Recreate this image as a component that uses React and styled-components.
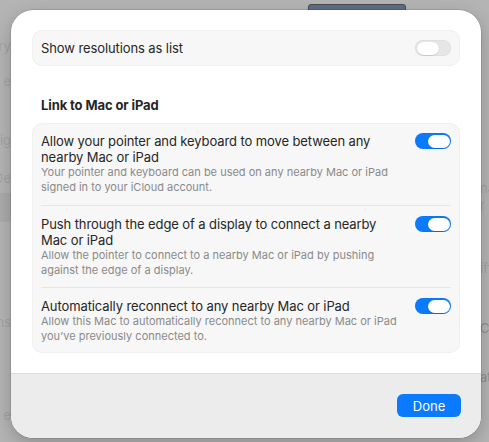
import React from 'react';
import styled, { createGlobalStyle } from 'styled-components';

const GlobalStyle = createGlobalStyle`
  html, body {
    margin: 0;
    padding: 0;
    background: #b4b4b4;
  }
  body {
    font-family: Inter, "Liberation Sans", sans-serif;
    -webkit-font-smoothing: antialiased;
  }
`;

const Screen = styled.div`
  position: relative;
  width: 489px;
  height: 442px;
  overflow: hidden;
  background: #b4b4b4;
`;

// the window behind the sheet, mostly hidden
const Backdrop = styled.div`
  display: flex;
  justify-content: space-between;
  height: 100%;
`;

const Strip = styled.div`
  width: ${({ $w }) => $w}px;
  overflow: hidden;
  display: flex;
  flex-direction: column;
`;

const Frag = styled.div`
  height: ${({ $h }) => $h}px;
  width: 100%;
  flex-shrink: 0;
  display: flex;
  align-items: center;
  justify-content: ${({ $side }) => ($side === 'left' ? 'flex-end' : 'flex-start')};
  font-size: 13px;
  color: ${({ $dark }) => ($dark ? '#8e8e8e' : '#a2a2a2')};
  background: ${({ $band }) => ($band ? '#ababab' : 'transparent')};
  white-space: nowrap;
  filter: blur(0.4px);
`;

const TopButton = styled.div`
  position: absolute;
  left: 308px;
  top: 4px;
  width: 98px;
  height: 12px;
  border-radius: 3px;
  background: #5a6f8a;
  border: 1px solid #4a4a4a;
  box-sizing: border-box;
`;

const Sheet = styled.div`
  position: absolute;
  left: 11px;
  top: 10px;
  width: 470px;
  height: 428px;
  border-radius: 22px;
  background: #ffffff;
  overflow: hidden;
  display: flex;
  flex-direction: column;
  box-shadow: 0 0 0 0.5px rgba(0, 0, 0, 0.18), 0 6px 18px rgba(0, 0, 0, 0.22);
`;

const Content = styled.div`
  flex: 1;
  padding: 20px 21px 0;
`;

const Card = styled.div`
  background: #f7f7f7;
  box-shadow: inset 0 0 0 1px #f0f0f0;
  border-radius: 10px;
`;

const SimpleRow = styled.div`
  height: 36px;
  box-sizing: border-box;
  padding: 0 9px;
  display: flex;
  align-items: center;
  justify-content: space-between;
`;

const Label = styled.div`
  font-size: 13px;
  line-height: 16px;
  color: #262626;
  letter-spacing: -0.1px;
`;

const SectionTitle = styled.div`
  font-size: 13px;
  font-weight: 700;
  color: #262626;
  line-height: 16px;
  padding: 31px 9px 10px;
  letter-spacing: -0.1px;
`;

const Row = styled.div`
  display: flex;
  justify-content: space-between;
  align-items: flex-start;
  padding: ${({ $pad }) => $pad};
`;

const Texts = styled.div`
  width: 360px;
  display: flex;
  flex-direction: column;
`;

const Desc = styled.div`
  font-size: 11px;
  line-height: 15px;
  color: #8a8a8a;
`;

const Divider = styled.div`
  height: 1px;
  margin: 0 9px;
  background: #e6e6e6;
`;

const Switch = styled.div`
  flex-shrink: 0;
  width: 36px;
  height: 16px;
  border-radius: 8px;
  box-sizing: border-box;
  padding: 1.5px;
  display: flex;
  justify-content: ${({ $on }) => ($on ? 'flex-end' : 'flex-start')};
  background: ${({ $on }) => ($on ? '#0a7aff' : '#e6e6e6')};
  box-shadow: inset 0 0 0 0.5px rgba(0, 0, 0, 0.06);
`;

const Knob = styled.div`
  width: 22px;
  height: 13px;
  border-radius: 7px;
  background: #ffffff;
  box-shadow: 0 0.5px 1px rgba(0, 0, 0, 0.2);
`;

const Footer = styled.div`
  height: 65px;
  box-sizing: border-box;
  flex-shrink: 0;
  background: #ececec;
  border-top: 1px solid #dcdcdc;
  display: flex;
  justify-content: flex-end;
  align-items: flex-start;
  padding: 20px 20px 0;
`;

const Button = styled.button`
  width: 64px;
  height: 23px;
  border: none;
  border-radius: 6px;
  background: #0a7aff;
  color: #ffffff;
  font-family: inherit;
  font-size: 13px;
  padding: 0;
`;

const Toggle = ({ on }) => (
  <Switch $on={on}>
    <Knob />
  </Switch>
);

const options = [
  {
    title: 'Allow your pointer and keyboard to move between any nearby Mac or iPad',
    desc: 'Your pointer and keyboard can be used on any nearby Mac or iPad signed in to your iCloud account.',
    pad: '10px 9px 10px',
  },
  {
    title: 'Push through the edge of a display to connect a nearby Mac or iPad',
    desc: 'Allow the pointer to connect to a nearby Mac or iPad by pushing against the edge of a display.',
    pad: '10px 9px 9px',
  },
  {
    title: 'Automatically reconnect to any nearby Mac or iPad',
    desc: 'Allow this Mac to automatically reconnect to any nearby Mac or iPad you\u2019ve previously connected to.',
    pad: '10px 9px 9px',
  },
];

const leftFrags = [
  { h: 38 }, { h: 16, t: 'ry' }, { h: 19 }, { h: 16, t: 'e' }, { h: 43 }, { h: 16, t: 'ig' },
  { h: 22 }, { h: 16, t: 'De' }, { h: 7 }, { h: 29, band: true }, { h: 92 }, { h: 16, t: 'ns' },
  { h: 77 }, { h: 16, t: 'e' },
];

const rightFrags = [
  { h: 180 }, { h: 16, t: 'na' }, { h: 1 }, { h: 16, t: 'r' }, { h: 47 }, { h: 16, t: 'iff' },
  { h: 44 }, { h: 16, t: 'C', dark: true }, { h: 33 }, { h: 16, t: 'at', dark: true },
];

const App = () => (
  <>
    <GlobalStyle />
    <Screen>
      <Backdrop>
        <Strip $w={11}>
          {leftFrags.map((f, i) => (
            <Frag key={i} $h={f.h} $band={f.band} $side="left">{f.t}</Frag>
          ))}
        </Strip>
        <Strip $w={9}>
          {rightFrags.map((f, i) => (
            <Frag key={i} $h={f.h} $dark={f.dark} $side="right">{f.t}</Frag>
          ))}
        </Strip>
      </Backdrop>
      <TopButton />

      <Sheet>
        <Content>
          <Card>
            <SimpleRow>
              <Label>Show resolutions as list</Label>
              <Toggle on={false} />
            </SimpleRow>
          </Card>

          <SectionTitle>Link to Mac or iPad</SectionTitle>

          <Card>
            {options.map((o, i) => (
              <React.Fragment key={o.title}>
                {i > 0 && <Divider />}
                <Row $pad={o.pad}>
                  <Texts>
                    <Label>{o.title}</Label>
                    <Desc>{o.desc}</Desc>
                  </Texts>
                  <Toggle on />
                </Row>
              </React.Fragment>
            ))}
          </Card>
        </Content>
        <Footer>
          <Button>Done</Button>
        </Footer>
      </Sheet>
    </Screen>
  </>
);

export default App;
